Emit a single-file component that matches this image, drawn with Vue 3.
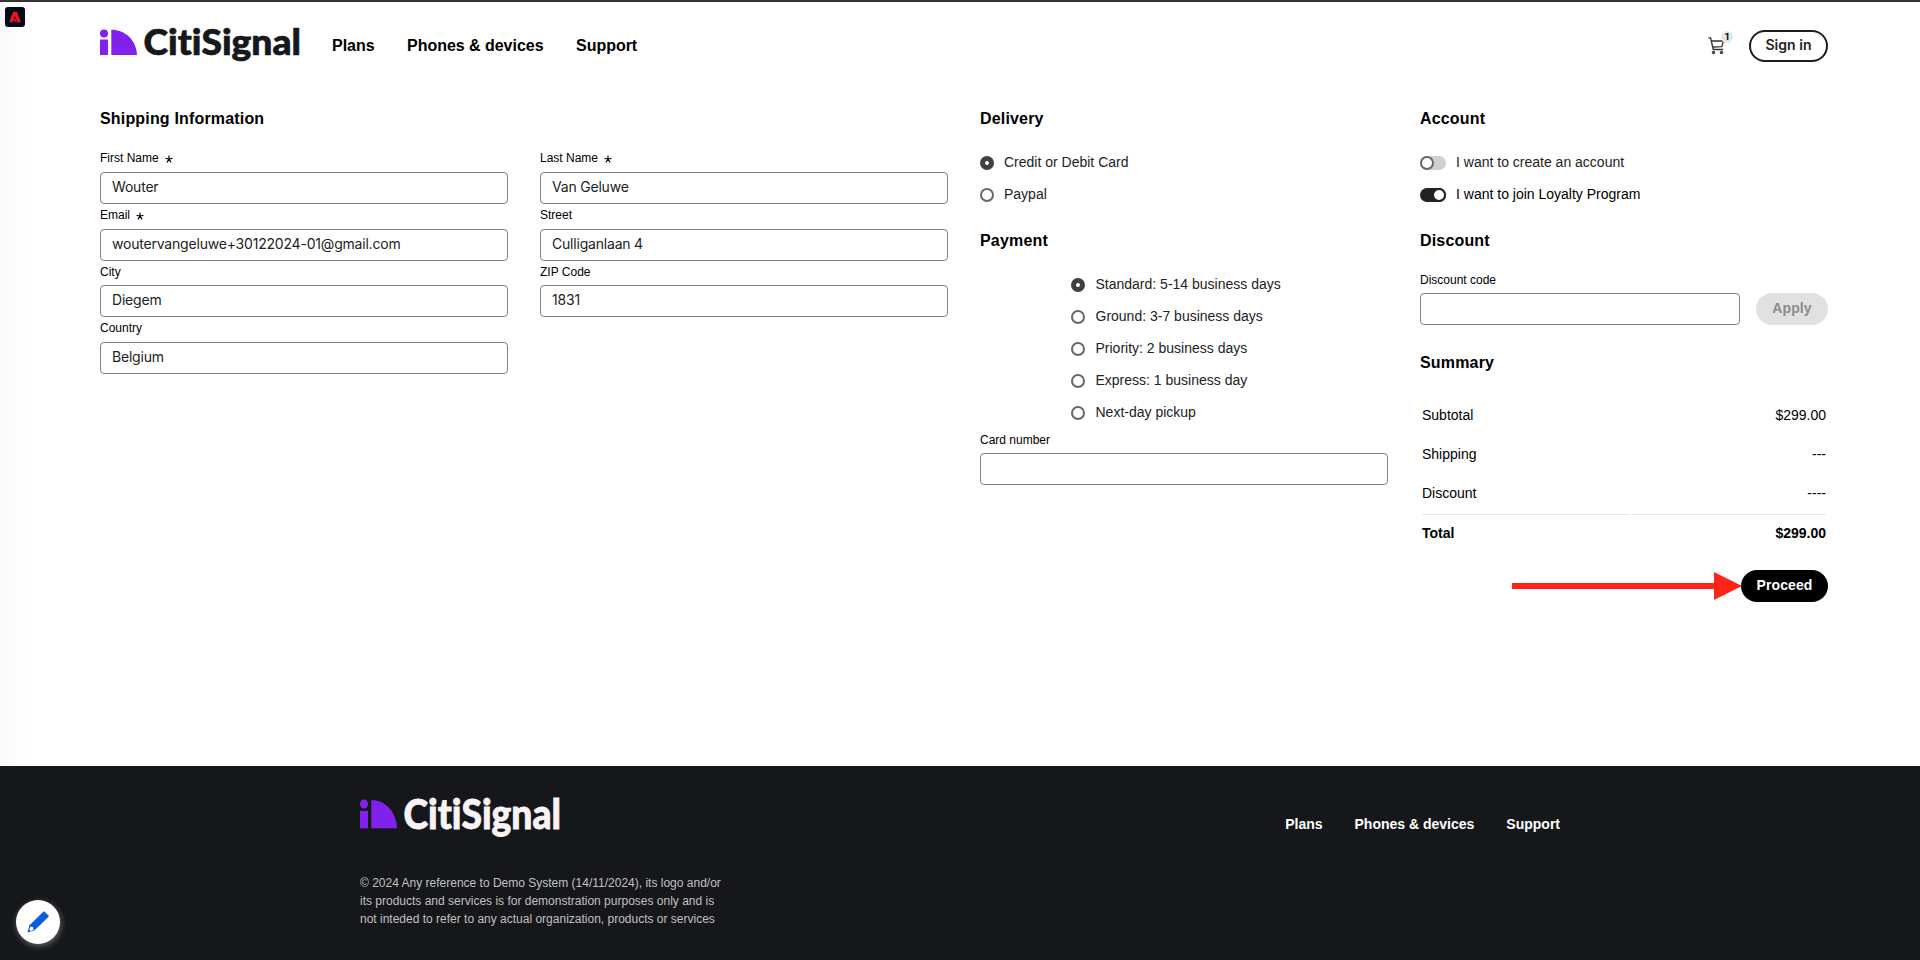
<script setup>
const nav = ['Plans', 'Phones & devices', 'Support']
const fields = [
  { label: 'First Name', required: true, value: 'Wouter' },
  { label: 'Last Name', required: true, value: 'Van Geluwe' },
  { label: 'Email', required: true, value: 'woutervangeluwe+30122024-01@gmail.com' },
  { label: 'Street', value: 'Culliganlaan 4' },
  { label: 'City', value: 'Diegem' },
  { label: 'ZIP Code', value: '1831' },
  { label: 'Country', value: 'Belgium' },
]
const delivery = ['Credit or Debit Card', 'Paypal']
const shipping = [
  'Standard: 5-14 business days',
  'Ground: 3-7 business days',
  'Priority: 2 business days',
  'Express: 1 business day',
  'Next-day pickup',
]
const summary = [
  ['Subtotal', '$299.00'],
  ['Shipping', '---'],
  ['Discount', '----'],
]
</script>

<template>
  <div class="page">
    <div class="badge">
      <svg width="20" height="20" viewBox="0 0 20 20">
        <rect width="20" height="20" rx="3" fill="#020b18" />
        <path d="M8.200 4.700h3.600L15.800 15.300h-3.400L10 8.800 8.900 12h1.700l1.300 3.300h-1.700l-.7-1.800H7.900l-.6 1.800H4.200z" fill="#fa1020" />
      </svg>
    </div>

    <header class="header">
      <svg class="logo" width="200" height="40" viewBox="0 0 200 40">
        <g fill="#8021ee">
          <circle cx="4" cy="5.500" r="4" />
          <rect x="0" y="11.500" width="8" height="15.500" />
          <path d="M11.300 1.800C25 1.800 36 11.500 37 27H11.300z" />
        </g>
        <text x="43.500" y="27" textLength="157.500" lengthAdjust="spacingAndGlyphs" class="word dark">CitiSignal</text>
      </svg>
      <nav class="nav">
        <a v-for="n in nav" :key="n">{{ n }}</a>
      </nav>
      <div class="cart">
        <svg width="18" height="18" viewBox="0 0 18 18" fill="none" stroke="#333" stroke-width="1.300">
          <path d="M.3.900h2.300L5.200 12.500h10M3.300 4h12.200l-1.700 5.600-9.300.400" />
          <circle cx="5.500" cy="15.500" r="1.700" fill="#444" stroke="none" />
          <circle cx="13.500" cy="15.500" r="1.700" fill="#444" stroke="none" />
        </svg>
        <span class="count">1</span>
      </div>
      <button class="signin">Sign in</button>
    </header>

    <main class="main">
      <section class="ship">
        <h2>Shipping Information</h2>
        <div class="fields">
          <div v-for="f in fields" :key="f.label" class="field">
            <label>{{ f.label }}<svg v-if="f.required" class="star" width="8" height="8" viewBox="0 0 8 8"><path d="M4 4.300V.500M4 4.300L.500 3.300M4 4.300l3.500-1M4 4.300L1.900 7.400M4 4.300l2.100 3.100" stroke="#000" stroke-width="1.150" /></svg></label>
            <div class="input">{{ f.value }}</div>
          </div>
        </div>
      </section>

      <section class="col">
        <h2>Delivery</h2>
        <div class="options">
          <div v-for="(d, i) in delivery" :key="d" class="option">
            <span class="radio" :class="{ on: i === 0 }"></span>{{ d }}
          </div>
        </div>
        <h2>Payment</h2>
        <div class="options indented">
          <div v-for="(s, i) in shipping" :key="s" class="option">
            <span class="radio" :class="{ on: i === 0 }"></span>{{ s }}
          </div>
        </div>
        <div class="field card">
          <label>Card number</label>
          <div class="input"></div>
        </div>
      </section>

      <section class="col">
        <h2>Account</h2>
        <div class="options">
          <div class="option"><span class="switch"></span>I want to create an account</div>
          <div class="option black"><span class="switch on"></span>I want to join Loyalty Program</div>
        </div>
        <h2>Discount</h2>
        <div class="coupon">
          <div class="field">
            <label>Discount code</label>
            <div class="input"></div>
          </div>
          <button class="apply">Apply</button>
        </div>
        <h2 class="sumhead">Summary</h2>
        <div class="summary">
          <div v-for="r in summary" :key="r[0]" class="row"><span>{{ r[0] }}</span><span>{{ r[1] }}</span></div>
          <div class="total"><span>Total</span><span>$299.00</span></div>
        </div>
        <div class="actions">
          <svg class="arrow" width="230" height="28" viewBox="0 0 230 28" fill="#ff2419">
            <path d="M0 11h202V0l28 14-28 14V17H0z" />
          </svg>
          <button class="proceed">Proceed</button>
        </div>
      </section>
    </main>

    <footer class="footer">
      <div class="about">
        <svg class="logo" width="200" height="44" viewBox="0 0 200 44">
          <g fill="#8021ee">
            <ellipse cx="4" cy="6" rx="4" ry="4.500" />
            <rect x="0" y="12.800" width="8" height="17.500" />
            <path d="M11.300 2C25 2 36 13 37 30.300H11.300z" />
          </g>
          <text x="43.500" y="27.100" transform="scale(1 1.140)" textLength="157.500" lengthAdjust="spacingAndGlyphs" class="word light">CitiSignal</text>
        </svg>
        <p>© 2024 Any reference to Demo System (14/11/2024), its logo and/or<br />its products and services is for demonstration purposes only and is<br />not inteded to refer to any actual organization, products or services</p>
      </div>
      <nav class="footnav">
        <a v-for="n in nav" :key="n">{{ n }}</a>
      </nav>
    </footer>

    <div class="edit">
      <svg width="22" height="22" viewBox="0 0 22 22">
        <path d="M16.500.600l.9 0 4.300 4.200-.1 1L7.600 19.300.700 21.400.500 21l2-6.800z" fill="#0a5fd8" />
        <path d="M3.500 15.600l2.600.700.500 2.500-3 1.200-1.300-1.200z" fill="#fff" />
      </svg>
    </div>
  </div>
</template>

<style>
body { margin: 0; background: #fff; }
</style>

<style scoped>
.page {
  position: relative;
  box-sizing: border-box;
  width: 1920px;
  height: 960px;
  overflow: hidden;
  display: flex;
  flex-direction: column;
  border-top: 2px solid #353334;
  background: linear-gradient(90deg, #f9f9f9, #fff 30px);
  color: #000;
  font-family: "Liberation Sans", Arial, sans-serif;
  font-size: 14px;
}
.badge { position: absolute; left: 5px; top: 5px; line-height: 0; }
.header { display: flex; align-items: center; height: 88px; padding: 0 92px 0 100px; box-sizing: border-box; }
.logo { display: block; overflow: visible; }
.word { font-family: Lato, sans-serif; font-weight: 900; font-size: 36.5px; font-variant-ligatures: none; stroke-width: .7px; }
.dark { fill: #16181b; stroke: #16181b; }
.light { fill: #f8f4f6; stroke: #f8f4f6; }
.nav { display: flex; gap: 32.5px; margin-left: 32px; font-size: 16px; font-weight: 700; letter-spacing: -.03px; }
.header .logo { margin-top: 4px; }
.cart { position: relative; margin-left: auto; width: 41px; height: 18px; }
.cart svg { display: block; }
.count {
  position: absolute; left: 13px; top: -6px; width: 12px; height: 12px; border-radius: 50%;
  background: #e6e6e6; font: 700 9px/12px Inter, sans-serif; text-align: center;
}
button { border: 0; padding: 0 0 3px; height: 32px; border-radius: 16px; font: 700 14px/28px "Liberation Sans", Arial, sans-serif; letter-spacing: .1px; }
.signin { width: 79px; border: 2px solid #1d1d1d; background: #fff; color: #222; font: 600 14px/25px Inter, sans-serif; letter-spacing: .05px; }
.main { height: 676px; box-sizing: border-box; padding: 16px 92px 0 100px; display: grid; grid-template-columns: 848px 408px 408px; column-gap: 32px; }
h2 { margin: 0; font-size: 16px; line-height: 26px; height: 41px; font-weight: 700; letter-spacing: .17px; }
.fields { display: grid; grid-template-columns: 408px 408px; column-gap: 32px; padding-top: .33px; }
.field label { display: block; height: 24.670px; font-size: 12px; line-height: 23px; }
.col .field label { line-height: 25px; }
.star { margin-left: 6px; vertical-align: -1px; }
.input {
  box-sizing: border-box; height: 32px; border: 1px solid #808080; border-radius: 4px; background: #fff;
  padding-left: 11px; font: 14px/28px Inter, sans-serif; letter-spacing: -.2px; color: #222;
}
.options { height: 81px; }
.option { display: flex; align-items: flex-start; height: 32px; color: #222; line-height: 30px; }
.option.black { color: #000; }
.indented { height: 159.330px; padding-left: 91px; }
.radio { box-sizing: border-box; width: 14px; height: 14px; border: 2px solid #686868; border-radius: 50%; background: #fff; margin: 9px 10px 0 0; }
.indented .radio { margin-right: 10.500px; }
.radio.on { border: 5px solid #404040; }
.switch { display: flex; width: 26px; height: 14px; border-radius: 7px; background: #cfcfcf; margin: 9px 10px 0 0; }
.switch::before { content: ""; box-sizing: border-box; width: 14px; height: 14px; border: 2px solid #686868; border-radius: 50%; background: #fff; }
.switch.on { background: #222; justify-content: flex-end; }
.switch.on::before { border-color: #222; }
.coupon { display: flex; align-items: flex-end; gap: 16px; height: 56px; }
.coupon .field { width: 320px; }
.apply { width: 72px; background: #e1e1e1; color: #8c8c8c; }
.sumhead { margin-top: 25px; }
.summary { margin: 0 2px; padding-top: 6px; }
.row, .total { display: flex; justify-content: space-between; height: 39px; line-height: 37px; }
.total {
  font-weight: 700; border-top: 1px solid transparent; height: 38px; line-height: 36px;
  background: linear-gradient(90deg, #e6e6e6 208px, transparent 208px 210px, #e6e6e6 210px) 0 0 / 100% 1px no-repeat border-box;
}
.actions { position: relative; display: flex; justify-content: flex-end; padding-top: 17px; }
.arrow { position: absolute; right: 86px; top: 19px; }
.proceed { width: 87px; background: #000; color: #fff; }
.footer { flex: 1; display: flex; justify-content: space-between; background: #16171b; padding: 32px 360px 0; }
.about p { margin: 32px 0 0; font-size: 12px; line-height: 18px; color: #c0c0c0; white-space: nowrap; }
.footnav { display: flex; gap: 32px; padding-top: 18px; font-weight: 700; color: #fff; }
.edit {
  position: absolute; left: 16px; top: 898px; width: 44px; height: 44px; border-radius: 50%; background: #fff;
  display: flex; align-items: center; justify-content: center; box-shadow: 1px 2px 6px rgba(255, 255, 255, .35);
}
</style>
